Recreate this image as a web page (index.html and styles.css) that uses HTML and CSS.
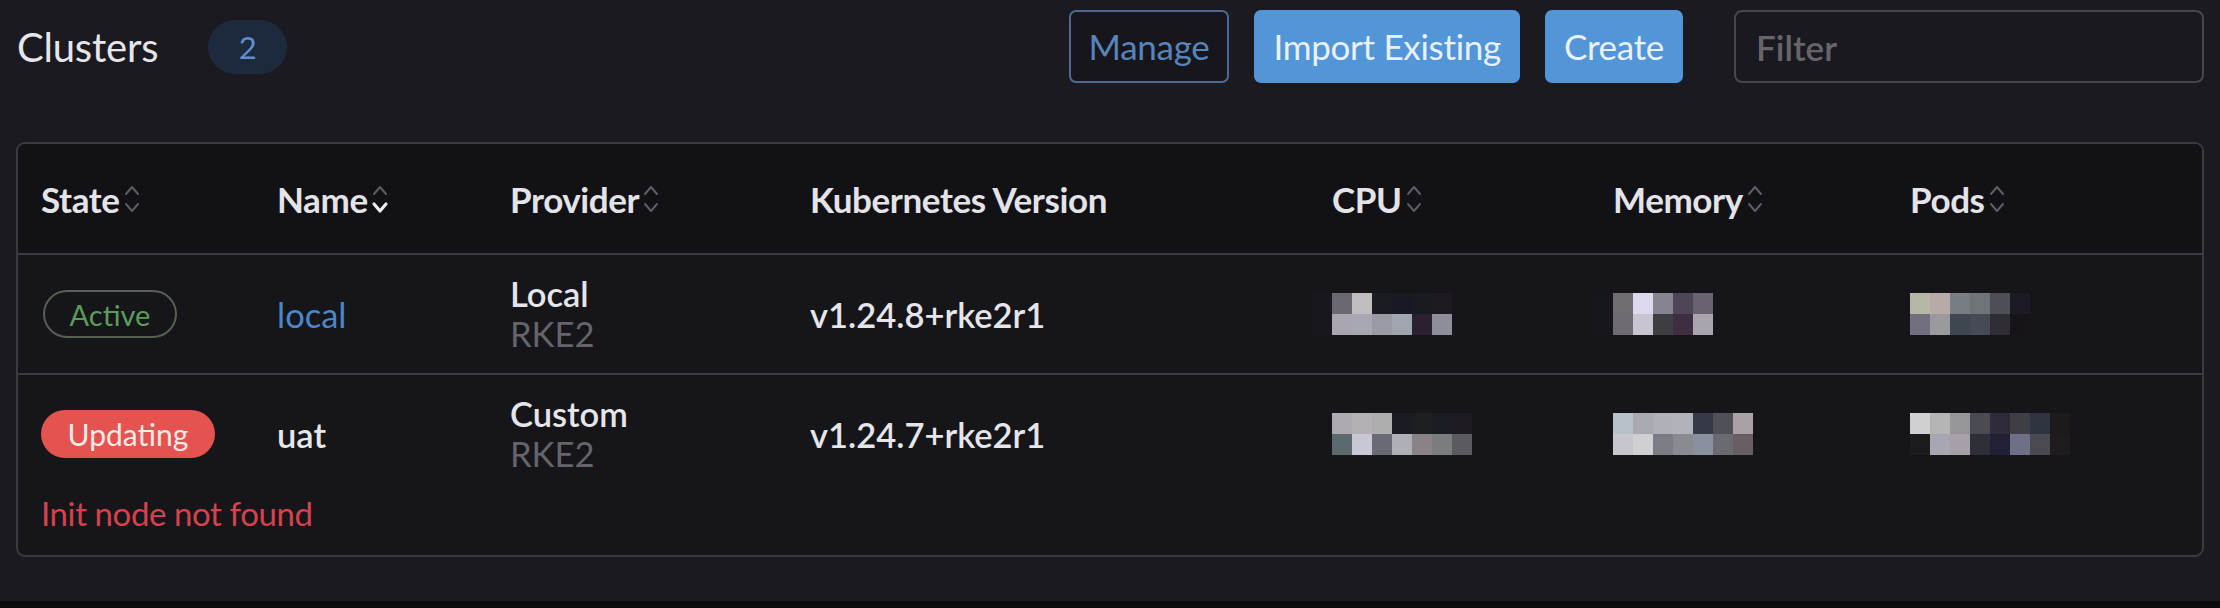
FILE: index.html
```html
<!DOCTYPE html>
<html lang="en">
<head>
<meta charset="utf-8">
<title>Clusters</title>
<link rel="stylesheet" href="styles.css">
</head>
<body>
<div class="page">
  <header class="topbar">
    <div class="title-group">
      <h1 class="title">Clusters</h1>
      <span class="count">2</span>
    </div>
    <div class="actions">
      <button class="btn btn-outline">Manage</button>
      <button class="btn btn-primary">Import Existing</button>
      <button class="btn btn-primary">Create</button>
      <div class="filter">Filter</div>
    </div>
  </header>

  <div class="table">
    <div class="row head">
      <div class="th">State<svg class="sort" viewBox="0 0 20 36"><path d="M4 13 L10 6 L16 13" /><path d="M4 23 L10 30 L16 23" /></svg></div>
      <div class="th">Name<svg class="sort" viewBox="0 0 20 36"><path d="M4 13 L10 6 L16 13" /><path class="on" d="M4 23 L10 30 L16 23" /></svg></div>
      <div class="th">Provider<svg class="sort" viewBox="0 0 20 36"><path d="M4 13 L10 6 L16 13" /><path d="M4 23 L10 30 L16 23" /></svg></div>
      <div class="th">Kubernetes Version</div>
      <div class="th">CPU<svg class="sort" viewBox="0 0 20 36"><path d="M4 13 L10 6 L16 13" /><path d="M4 23 L10 30 L16 23" /></svg></div>
      <div class="th">Memory<svg class="sort" viewBox="0 0 20 36"><path d="M4 13 L10 6 L16 13" /><path d="M4 23 L10 30 L16 23" /></svg></div>
      <div class="th">Pods<svg class="sort" viewBox="0 0 20 36"><path d="M4 13 L10 6 L16 13" /><path d="M4 23 L10 30 L16 23" /></svg></div>
    </div>

    <div class="row body r1">
      <div class="td"><span class="pill active">Active</span></div>
      <div class="td"><a class="link">local</a></div>
      <div class="td stack"><span class="main">Local</span><span class="sub">RKE2</span></div>
      <div class="td">v1.24.8+rke2r1</div>
      <div class="td">
        <div class="mosaic m7 shift">
          <i style="background:#18171e"></i><i style="background:#6a6870"></i><i style="background:#c0bcc0"></i><i style="background:#1a1c22"></i><i style="background:#171a22"></i><i style="background:#181c20"></i><i style="background:#1e1a22"></i>
          <i style="background:#18171e"></i><i style="background:#aaa6b0"></i><i style="background:#a8a8b2"></i><i style="background:#9a9aa4"></i><i style="background:#a0a6ae"></i><i style="background:#2a2030"></i><i style="background:#8e8e9a"></i>
        </div>
      </div>
      <div class="td">
        <div class="mosaic m6 shift">
          <i style="background:#16161c"></i><i style="background:#706c72"></i><i style="background:#dcd8ee"></i><i style="background:#86848e"></i><i style="background:#4e4658"></i><i style="background:#6a6270"></i>
          <i style="background:#16161c"></i><i style="background:#6e6c72"></i><i style="background:#c8c4d0"></i><i style="background:#3e3e42"></i><i style="background:#3e2e40"></i><i style="background:#aaa4ae"></i>
        </div>
      </div>
      <div class="td">
        <div class="mosaic m6">
          <i style="background:#b8b6a6"></i><i style="background:#b8aaa6"></i><i style="background:#767e84"></i><i style="background:#6e7478"></i><i style="background:#4e4e56"></i><i style="background:#1c1a24"></i>
          <i style="background:#72707e"></i><i style="background:#9a9a9e"></i><i style="background:#3e4650"></i><i style="background:#464a56"></i><i style="background:#2e2e34"></i><i style="background:#161418"></i>
        </div>
      </div>
    </div>

    <div class="row body r2">
      <div class="td col">
        <div class="line"><span class="pill updating">Updating</span></div>
        <div class="error">Init node not found</div>
      </div>
      <div class="td"><div class="line">uat</div></div>
      <div class="td"><div class="line stack"><span class="main">Custom</span><span class="sub">RKE2</span></div></div>
      <div class="td"><div class="line">v1.24.7+rke2r1</div></div>
      <div class="td">
        <div class="line">
          <div class="mosaic m7">
            <i style="background:#aeaab2"></i><i style="background:#b4b0b6"></i><i style="background:#aeaeae"></i><i style="background:#1a1c24"></i><i style="background:#1c1e20"></i><i style="background:#1c1c24"></i><i style="background:#1e1c22"></i>
            <i style="background:#5a6a6e"></i><i style="background:#c8c8d4"></i><i style="background:#6a6a74"></i><i style="background:#aeb0b6"></i><i style="background:#8a8288"></i><i style="background:#7a7c80"></i><i style="background:#5a5a60"></i>
          </div>
        </div>
      </div>
      <div class="td">
        <div class="line">
          <div class="mosaic m7">
            <i style="background:#b8c0c8"></i><i style="background:#a8aab0"></i><i style="background:#b0b0b8"></i><i style="background:#b0b4ba"></i><i style="background:#363a48"></i><i style="background:#505058"></i><i style="background:#aaa0a8"></i>
            <i style="background:#c6c6cc"></i><i style="background:#d0d0d4"></i><i style="background:#7c7c84"></i><i style="background:#8a8a92"></i><i style="background:#8a90a0"></i><i style="background:#6a6a70"></i><i style="background:#6a5e66"></i>
          </div>
        </div>
      </div>
      <div class="td">
        <div class="line">
          <div class="mosaic m8">
            <i style="background:#d0d0d0"></i><i style="background:#b4b4b4"></i><i style="background:#96969a"></i><i style="background:#4a4a52"></i><i style="background:#2e2a3a"></i><i style="background:#3e3e44"></i><i style="background:#2e3440"></i><i style="background:#1e1a1a"></i>
            <i style="background:#1c1b20"></i><i style="background:#a8a6b0"></i><i style="background:#a8a0a8"></i><i style="background:#2e3038"></i><i style="background:#222036"></i><i style="background:#6e7088"></i><i style="background:#4a4a50"></i><i style="background:#1e1c1c"></i>
          </div>
        </div>
      </div>
    </div>
  </div>
  <div class="footer-band"></div>
</div>
</body>
</html>
```

FILE: styles.css
```css
* { box-sizing: border-box; }

html, body {
  margin: 0;
  padding: 0;
  background: #1b1a20;
  height: 608px;
  overflow: hidden;
}

body {
  font-family: Lato, "Open Sans", "Liberation Sans", sans-serif;
  color: #e3e3e7;
}

.page {
  height: 608px;
  display: flex;
  flex-direction: column;
  padding: 10px 16px 0 16px;
}

.topbar {
  display: flex;
  align-items: center;
  justify-content: space-between;
  height: 73px;
}

.title-group {
  display: flex;
  align-items: center;
  gap: 50px;
  padding-left: 1px;
}

.title {
  margin: 0;
  font-size: 40px;
  font-weight: 400;
  color: #e6e6ea;
  letter-spacing: -0.2px;
}

.count {
  display: inline-flex;
  align-items: center;
  justify-content: center;
  width: 79px;
  height: 54px;
  border-radius: 27px;
  background: #1d2a3e;
  color: #5f8fcc;
  font-size: 31px;
}

.actions {
  display: flex;
  align-items: center;
  gap: 25px;
}

.btn {
  font-family: inherit;
  font-size: 35px;
  height: 73px;
  border-radius: 7px;
  padding: 0 19px;
  cursor: pointer;
  line-height: 1;
  letter-spacing: -0.3px;
}

.btn-outline {
  background: #17161c;
  border: 2px solid #4a6a92;
  color: #5784bb;
  padding: 0 18px;
}

.btn-primary {
  background: #5296d8;
  border: none;
  color: #e9f1fa;
}

.filter {
  margin-left: 26px;
  width: 470px;
  height: 73px;
  border: 2px solid #47464c;
  border-radius: 8px;
  background: #1a191f;
  color: #66656c;
  font-size: 35px;
  font-weight: 600;
  display: flex;
  align-items: center;
  padding-left: 20px;
}

.table {
  margin-top: 59px;
  border: 2px solid #3b3a40;
  border-radius: 9px;
  background: #16151a;
  overflow: hidden;
}

.row {
  display: grid;
  grid-template-columns: 236px 233px 300px 522px 281px 297px 1fr;
  padding-left: 23px;
}

.head {
  height: 111px;
  align-items: center;
  background: #121116;
  border-bottom: 2px solid #3b3a40;
}

.th {
  display: flex;
  align-items: center;
  font-size: 35px;
  font-weight: 700;
  color: #e4e4e8;
  letter-spacing: -0.4px;
}

.sort {
  width: 20px;
  height: 36px;
  margin-left: 2px;
  fill: none;
  stroke: #5e5d64;
  stroke-width: 2;
  stroke-linecap: round;
  stroke-linejoin: round;
}

.sort .on {
  stroke: #ececf0;
  stroke-width: 3.2;
}

.body {
  font-size: 34.5px;
  font-weight: 600;
  color: #e6e6ea;
}

.r1 {
  height: 120px;
  align-items: center;
  border-bottom: 2px solid #3b3a40;
}

.r2 {
  align-items: start;
  padding-top: 35px;
  padding-bottom: 22px;
}

.td {
  display: flex;
  align-items: center;
}

.td.col {
  flex-direction: column;
  align-items: flex-start;
}

.line {
  height: 48px;
  display: flex;
  align-items: center;
}

.stack {
  flex-direction: column;
  align-items: flex-start;
  justify-content: center;
  line-height: 40px;
}

.main { color: #e6e6ea; }

.sub {
  color: #65646a;
  font-weight: 400;
}

.link {
  color: #4b86c6;
  font-weight: 400;
}

.pill {
  display: inline-flex;
  align-items: center;
  justify-content: center;
  border-radius: 24px;
  font-weight: 400;
  white-space: nowrap;
}

.pill.active {
  height: 48px;
  width: 134px;
  border: 2px solid #56604f;
  color: #5b9c5b;
  margin-left: 2px;
  font-size: 29px;
}

.pill.updating {
  height: 48px;
  width: 174px;
  background: #e4534f;
  color: #fbe9e8;
  font-size: 30px;
}

.error {
  margin-top: 35px;
  color: #d4434b;
  font-size: 33px;
  font-weight: 400;
  white-space: nowrap;
  letter-spacing: -0.4px;
}

.mosaic {
  display: grid;
  grid-template-rows: 21px 21px;
  width: max-content;
}

.m6 { grid-template-columns: repeat(6, 20px); }
.m7 { grid-template-columns: repeat(7, 20px); }
.m8 { grid-template-columns: repeat(8, 20px); }
.shift { margin-left: -20px; }

.mosaic i {
  display: block;
  width: 20px;
  height: 21px;
}

.footer-band {
  margin-top: auto;
  height: 7px;
  margin-left: -16px;
  margin-right: -16px;
  background: #0b0a0d;
}
```
